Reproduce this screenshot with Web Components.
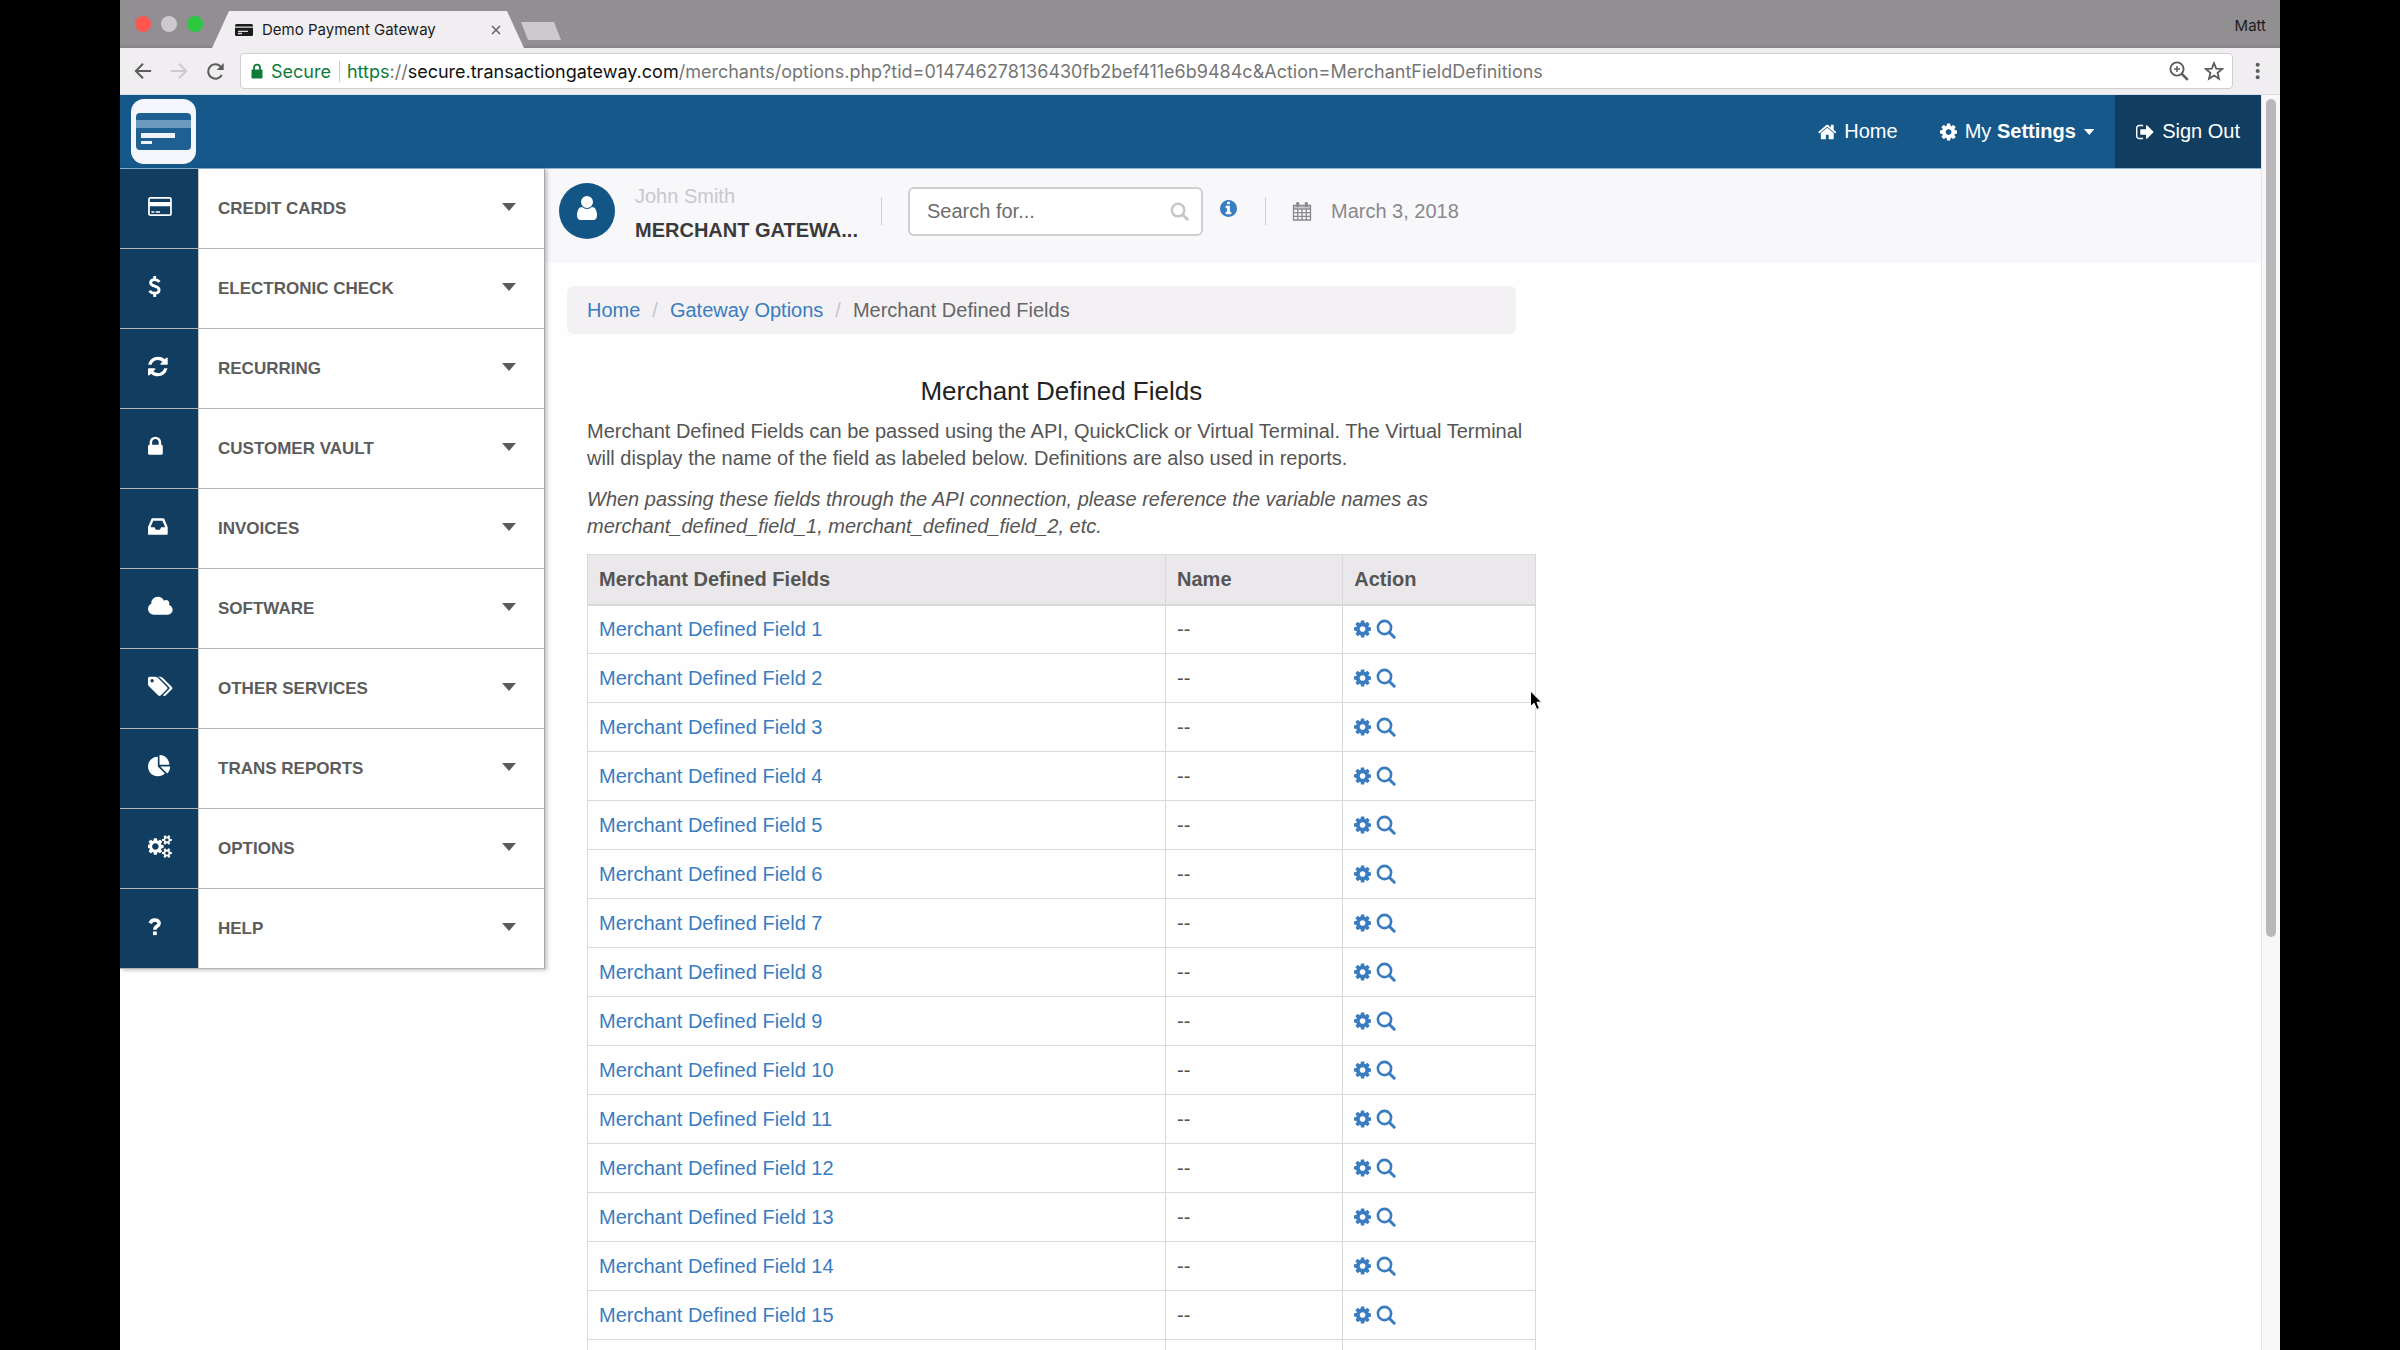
<!DOCTYPE html>
<html lang="en">
<head>
<meta charset="utf-8">
<title>Demo Payment Gateway</title>
<style>
    html, body {
        height: 100%;
        margin: 0;
    }

    body {
        background: #000;
        font-family: "Liberation Sans", Arial, sans-serif;
        font-size: 20px;
        color: #555;
        overflow: hidden;
    }
</style>
</head>
<body>
<browser-window>
    <tab-strip slot="tabs" profile="Matt">Demo Payment Gateway</tab-strip>
    <browser-toolbar slot="toolbar"></browser-toolbar>

    <site-header></site-header>
    <page-layout>
        <side-menu slot="menu">
            <menu-item icon="card">CREDIT CARDS</menu-item>
            <menu-item icon="dollar">ELECTRONIC CHECK</menu-item>
            <menu-item icon="refresh">RECURRING</menu-item>
            <menu-item icon="lock">CUSTOMER VAULT</menu-item>
            <menu-item icon="inbox">INVOICES</menu-item>
            <menu-item icon="cloud">SOFTWARE</menu-item>
            <menu-item icon="tags">OTHER SERVICES</menu-item>
            <menu-item icon="pie">TRANS REPORTS</menu-item>
            <menu-item icon="cogs">OPTIONS</menu-item>
            <menu-item icon="question">HELP</menu-item>
        </side-menu>
        <account-bar user="John Smith" company="MERCHANT GATEWA..." date="March 3, 2018"></account-bar>
        <bread-crumbs></bread-crumbs>
        <fields-panel heading="Merchant Defined Fields">
            <span slot="intro">Merchant Defined Fields can be passed using the API, QuickClick or Virtual Terminal. The Virtual Terminal will display the name of the field as labeled below. Definitions are also used in reports.</span>
            <span slot="note">When passing these fields through the API connection, please reference the variable names as merchant_defined_field_1, merchant_defined_field_2, etc.</span>
            <fields-table count="16"></fields-table>
        </fields-panel>
    </page-layout>
</browser-window>

<script>
    // name: [viewBox, markup]
    const ICONS = {
        home: ['64 0 1664 1792', '<path d="M1472 992v480q0 26-19 45t-45 19h-384v-384h-256v384h-384q-26 0-45-19t-19-45v-480q0-1 .5-3t.5-3l575-474 575 474q1 2 1 6zm223-69l-62 74q-8 9-21 11h-3q-13 0-21-7l-692-577-692 577q-12 8-24 7-13-2-21-11l-62-74q-8-10-7-23.5t11-21.5l719-599q32-26 76-26t76 26l244 204v-195q0-14 9-23t23-9h192q14 0 23 9t9 23v408l219 182q10 8 11 21.5t-7 23.5z"/>'],
        cog: ['128 0 1536 1792', '<path d="M1152 896q0-106-75-181t-181-75-181 75-75 181 75 181 181 75 181-75 75-181zm512-109v222q0 12-8 23t-20 13l-185 28q-19 54-39 91 35 50 107 138 10 12 10 25t-9 23q-27 37-99 108t-94 71q-12 0-26-9l-138-108q-44 23-91 38-16 136-29 186-7 28-36 28h-222q-14 0-24.5-8.5t-11.5-21.5l-28-184q-49-16-90-37l-141 107q-10 9-25 9-14 0-25-11-126-114-165-168-7-10-7-23 0-12 8-23 15-21 51-66.5t54-70.5q-27-50-41-99l-183-27q-13-2-21-12.5t-8-23.5v-222q0-12 8-23t19-13l186-28q14-46 39-92-40-57-107-138-10-12-10-24 0-10 9-23 26-36 98.5-107.5t94.5-71.5q13 0 26 10l138 107q44-23 91-38 16-136 29-186 7-28 36-28h222q14 0 24.5 8.5t11.5 21.5l28 184q49 16 90 37l142-107q9-9 24-9 13 0 25 10 129 119 165 170 7 8 7 22 0 12-8 23-15 21-51 66.5t-54 70.5q26 50 41 98l183 28q13 2 21 12.5t8 23.5z"/>'],
        signout: ['64 0 1600 1792', '<path d="M704 1440q0 4 1 20t.5 26.5-3 23.5-10 19.5-20.5 6.5h-320q-119 0-203.5-84.5t-84.5-203.5v-704q0-119 84.5-203.5t203.5-84.5h320q13 0 22.5 9.5t9.5 22.5q0 4 1 20t.5 26.5-3 23.5-10 19.5-20.5 6.5h-320q-66 0-113 47t-47 113v704q0 66 47 113t113 47h312l11.5 1 11.5 3 8 5.5 7 9 2 13.5zm928-544q0 26-19 45l-544 544q-19 19-45 19t-45-19-19-45v-288h-448q-26 0-45-19t-19-45v-384q0-26 19-45t45-19h448v-288q0-26 19-45t45-19 45 19l544 544q19 19 19 45z"/>'],
        refresh: ['128 0 1536 1792', '<path d="M1639 1056q0 5-1 7-64 268-268 434.5t-478 166.5q-146 0-282.5-55t-243.5-157l-129 129q-19 19-45 19t-45-19-19-45v-448q0-26 19-45t45-19h448q26 0 45 19t19 45-19 45l-137 137q71 66 161 102t187 36q134 0 250-65t186-179q11-17 53-117 8-23 30-23h192q13 0 22.5 9.5t9.5 22.5zm25-800v448q0 26-19 45t-45 19h-448q-26 0-45-19t-19-45 19-45l138-138q-148-137-349-137-134 0-250 65t-186 179q-11 17-53 117-8 23-30 23h-199q-13 0-22.5-9.5t-9.5-22.5v-7q65-268 270-434.5t480-166.5q146 0 284 55.5t245 156.5l130-129q19-19 45-19t45 19 19 45z"/>'],
        lock: ['320 0 1152 1792', '<path d="M640 768h512v-192q0-106-75-181t-181-75-181 75-75 181v192zm832 96v576q0 40-28 68t-68 28h-960q-40 0-68-28t-28-68v-576q0-40 28-68t68-28h32v-192q0-184 132-316t316-132 316 132 132 316v192h32q40 0 68 28t28 68z"/>'],
        inbox: ['128 0 1536 1792', '<path d="M1151 960h316q-1-3-2.5-8t-2.5-8l-212-496h-708l-212 496q-1 2-2.5 8t-2.5 8h316l95 192h320zm513 30v482q0 26-19 45t-45 19h-1408q-26 0-45-19t-19-45v-482q0-62 25-123l238-552q10-25 36.5-42t52.5-17h832q26 0 52.5 17t36.5 42l238 552q25 61 25 123z"/>'],
        cloud: ['64 0 1920 1792', '<path d="M1984 1152q0 159-112.5 271.5t-271.5 112.5h-1088q-185 0-316.5-131.5t-131.5-316.5q0-132 71-241.5t187-163.5q-2-28-2-43 0-212 150-362t362-150q158 0 286.5 88t187.5 230q70-62 166-62 106 0 181 75t75 181q0 75-41 138 129 30 213 134.5t84 239.5z"/>'],
        tags: ['0 0 1920 1792', '<path d="M448 448q0-53-37.5-90.5t-90.5-37.5-90.5 37.5-37.5 90.5 37.5 90.5 90.5 37.5 90.5-37.5 37.5-90.5zm1067 576q0 53-37 90l-491 492q-39 37-91 37-53 0-90-37l-715-716q-38-37-64.5-101t-26.5-117v-416q0-52 38-90t90-38h416q53 0 117 26.5t102 64.5l715 714q37 39 37 91zm384 0q0 53-37 90l-491 492q-39 37-91 37-36 0-59-14t-53-45l470-470q37-37 37-90 0-52-37-91l-715-714q-38-38-102-64.5t-117-26.5h224q53 0 117 26.5t102 64.5l715 714q37 39 37 91z"/>'],
        pie: ['0 0 1792 1792', '<path d="M768 890l546 546q-106 108-247.5 168t-298.5 60q-209 0-385.5-103t-279.5-279.5-103-385.5 103-385.5 279.5-279.5 385.5-103v762zm187 6h773q0 157-60 298.5t-168 247.5zm709-128h-768v-768q209 0 385.5 103t279.5 279.5 103 385.5z"/>'],
        cogs: ['0 0 1920 1792', '<path d="M832 896q0-106-75-181t-181-75-181 75-75 181 75 181 181 75 181-75 75-181zm768 512q0-52-38-90t-90-38-90 38-38 90q0 53 37.5 90.5t90.5 37.5 90.5-37.5 37.5-90.5zm0-1024q0-52-38-90t-90-38-90 38-38 90q0 53 37.5 90.5t90.5 37.5 90.5-37.5 37.5-90.5zm-384 421v185q0 10-7 19.5t-16 10.5l-155 24q-11 35-32 76 34 48 90 115 7 11 7 20 0 12-7 19-23 30-82.5 89.5t-78.5 59.5q-11 0-21-7l-115-90q-37 19-77 31-11 108-23 155-7 24-30 24h-186q-11 0-20-7.5t-10-17.5l-23-153q-34-10-75-31l-118 89q-7 7-20 7-11 0-21-8-144-133-144-160 0-9 7-19 10-14 41-53t47-61q-23-44-35-82l-152-24q-10-1-17-9.5t-7-19.5v-185q0-10 7-19.5t16-10.5l155-24q11-35 32-76-34-48-90-115-7-11-7-20 0-12 7-20 22-30 82-89t79-59q11 0 21 7l115 90q34-18 77-32 11-108 23-154 7-24 30-24h186q11 0 20 7.5t10 17.5l23 153q34 10 75 31l118-89q8-7 20-7 11 0 21 8 144 133 144 160 0 8-7 19-12 16-42 54t-45 60q23 48 34 82l152 23q10 2 17 10.5t7 19.5zm640 533v140q0 16-149 31-12 27-30 52 51 113 51 138 0 4-4 7-122 71-124 71-8 0-46-47t-52-68q-20 2-30 2t-30-2q-14 21-52 68t-46 47q-2 0-124-71-4-3-4-7 0-25 51-138-18-25-30-52-149-15-149-31v-140q0-16 149-31 13-29 30-52-51-113-51-138 0-4 4-7 4-2 35-20t59-34 30-16q8 0 46 46.5t52 67.5q20-2 30-2t30 2q51-71 92-112l6-2q4 0 124 70 4 3 4 7 0 25-51 138 17 23 30 52 149 15 149 31zm0-1024v140q0 16-149 31-12 27-30 52 51 113 51 138 0 4-4 7-122 71-124 71-8 0-46-47t-52-68q-20 2-30 2t-30-2q-14 21-52 68t-46 47q-2 0-124-71-4-3-4-7 0-25 51-138-18-25-30-52-149-15-149-31v-140q0-16 149-31 13-29 30-52-51-113-51-138 0-4 4-7 4-2 35-20t59-34 30-16q8 0 46 46.5t52 67.5q20-2 30-2t30 2q51-71 92-112l6-2q4 0 124 70 4 3 4 7 0 25-51 138 17 23 30 52 149 15 149 31z"/>'],
        search: ['0 0 20 20', '<circle cx="8.5" cy="8.5" r="6.6" fill="none" stroke="currentColor" stroke-width="2.6"/><path d="M13.2 13.2l5 5" fill="none" stroke="currentColor" stroke-width="3" stroke-linecap="round"/>'],
        user: ['256 128 1280 1536', '<path d="M1536 1399q0 109-62.5 187t-150.5 78h-854q-88 0-150.5-78t-62.5-187q0-85 8.5-160.5t31.5-152 58.5-131 94-89 134.5-34.5q131 128 313 128t313-128q76 0 134.5 34.5t94 89 58.5 131 31.5 152 8.5 160.5zm-256-887q0 159-112.5 271.5t-271.5 112.5-271.5-112.5-112.5-271.5 112.5-271.5 271.5-112.5 271.5 112.5 112.5 271.5z"/>'],
        info: ['128 128 1536 1536', '<path d="M1152 1376v-160q0-14-9-23t-23-9h-96v-512q0-14-9-23t-23-9h-320q-14 0-23 9t-9 23v160q0 14 9 23t23 9h96v320h-96q-14 0-23 9t-9 23v160q0 14 9 23t23 9h448q14 0 23-9t9-23zm-128-896v-160q0-14-9-23t-23-9h-192q-14 0-23 9t-9 23v160q0 14 9 23t23 9h192q14 0 23-9t9-23zm640 416q0 209-103 385.5t-279.5 279.5-385.5 103-385.5-103-279.5-279.5-103-385.5 103-385.5 279.5-279.5 385.5-103 385.5 103 279.5 279.5 103 385.5z"/>'],
        card: ['0 0 25 24', '<rect x="1" y="3" width="23" height="18" rx="1.5" fill="none" stroke="currentColor" stroke-width="1.8"/><path d="M1 7.2h23v4.6H1zM3.6 17h3v1.6h-3zM8 17h4.6v1.6H8z"/>'],
        dollar: ['0 0 14 24', '<path d="M12 7.2C10.6 5.6 8.9 4.8 7 4.8c-2.6 0-4.3 1.3-4.3 3.3 0 4.6 8.9 2.6 8.9 7.4 0 2.2-1.9 3.6-4.6 3.6-2.3 0-4.2-.9-5.5-2.5M7 1v4M7 19v4" fill="none" stroke="currentColor" stroke-width="3"/>'],
        question: ['0 0 14 24', '<path d="M2.2 8.6C3.2 6.2 5 5.2 7.2 5.2c2.5 0 4.4 1.4 4.4 3.5 0 3.3-4.5 3-4.5 6.6" fill="none" stroke="currentColor" stroke-width="3.8"/><path d="M5.2 17.2h4v3.8h-4z"/>'],
        calendar: ['0 0 20 20', '<path d="M1.5 4.5h17v14.5h-17zM1.5 8h17M1.5 11.7h17M1.5 15.3h17M5.7 8v11M10 8v11M14.3 8v11" fill="none" stroke="currentColor" stroke-width="1.3"/><path d="M1 4h18v3H1z" opacity=".45"/><rect x="4.2" y="1" width="3" height="5" rx="1.2"/><rect x="12.8" y="1" width="3" height="5" rx="1.2"/>'],
        back: ['0 0 20 20', '<path d="M19 10H2.5M10 2L2 10l8 8" fill="none" stroke="currentColor" stroke-width="2.2"/>'],
        forward: ['0 0 20 20', '<path d="M1 10h16.5M10 2l8 8-8 8" fill="none" stroke="currentColor" stroke-width="2.2"/>'],
        reload: ['0 0 20 20', '<path d="M16.6 13.6A7.6 7.6 0 1 1 15.3 4.6" fill="none" stroke="currentColor" stroke-width="2.2"/><path d="M18.6 1v7.4h-7.4z"/>'],
        padlock: ['0 0 12 16', '<path d="M3 7V4.6a3 3 0 0 1 6 0V7" fill="none" stroke="currentColor" stroke-width="1.8"/><rect x="0.5" y="6.5" width="11" height="9" rx="1"/>'],
        zoom: ['0 0 20 20', '<circle cx="8" cy="8" r="6.6" fill="none" stroke="currentColor" stroke-width="1.9"/><path d="M8 5v6M5 8h6" stroke="currentColor" stroke-width="1.5"/><path d="M12.8 12.8l6 6" stroke="currentColor" stroke-width="2.6"/>'],
        star: ['0 0 20 20', '<path d="M10 2.2l2.2 5.5 5.9.4-4.5 3.8 1.4 5.8-5-3.2-5 3.2 1.4-5.8-4.5-3.8 5.9-.4z" fill="none" stroke="currentColor" stroke-width="1.8"/>'],
        dots: ['0 0 6 20', '<circle cx="3" cy="3" r="2.2"/><circle cx="3" cy="10" r="2.2"/><circle cx="3" cy="17" r="2.2"/>'],
        close: ['0 0 10 10', '<path d="M1 1l8 8M9 1l-8 8" stroke="currentColor" stroke-width="1.6"/>'],
        favicon: ['0 0 18 12', '<rect width="18" height="12" rx="1.5"/><path d="M0 3.2h18M3 7.3h10M3 9.5h4" stroke="#ddd" stroke-width="1.3"/>'],
        caret: ['0 0 14 8', '<path d="M0 0h14L7 8z"/>'],
        logo: ['0 0 65 65', '<rect width="65" height="65" rx="13" fill="#f5f6fb"/><rect x="5" y="14" width="55" height="37" rx="4" fill="#1e6092"/><path d="M5 21h55v8H5z" fill="#6b9abe"/><path d="M10 34h34v5H10zM10 42h11v3H10z" fill="#f0f4fa"/>'],
        pointer: ['0 0 14 22', '<path d="M1.5 1v15.5l3.6-3.3 2.6 6.3 2.8-1.2-2.6-6.1h4.7z" stroke="#fff" stroke-width="1"/>']
    };

    const RESET = `
        :host, *, *::before, *::after {
            box-sizing: border-box;
        }

        a {
            color: inherit;
            text-decoration: none;
        }

        button {
            display: flex;
            align-items: center;
            padding: 0;
            border: 0;
            background: none;
            color: inherit;
            font: inherit;
        }
    `;

    class BaseElement extends HTMLElement {
        connectedCallback() {
            if (!this.shadowRoot) {
                this.attachShadow({ mode: 'open' });
            }
            this.shadowRoot.innerHTML = `<style>${RESET}</style>${this.template()}`;
        }

        template() {
            return '<slot></slot>';
        }
    }

    class UiIcon extends BaseElement {
        template() {
            const [box, markup] = ICONS[this.getAttribute('name')];
            const size = this.getAttribute('size') || '20';
            return `
                <style>
                    :host { display: inline-flex; flex: none; }
                    svg { height: ${size}px; width: auto; fill: currentColor; display: block; }
                </style>
                <svg viewBox="${box}" aria-hidden="true">${markup}</svg>
            `;
        }
    }

    class BrowserWindow extends BaseElement {
        template() {
            return `
                <style>
                    :host {
                        display: flex;
                        flex-direction: column;
                        height: 100vh;
                        margin: 0 5%;
                        background: #fefefe;
                    }
                    .view { display: flex; flex: 1; min-height: 0; }
                    .page { flex: 1; min-width: 0; overflow: hidden auto; scrollbar-width: none; }
                    .scrollbar {
                        width: 19px;
                        padding: 4px 4px 0 4px;
                        background: #f9f7fa;
                        border-left: 1px solid #e6e4e7;
                    }
                    .thumb { height: 67%; border-radius: 5px; background: #b9b7b9; }
                </style>
                <slot name="tabs"></slot>
                <slot name="toolbar"></slot>
                <div class="view">
                    <div class="page"><slot></slot></div>
                    <div class="scrollbar"><div class="thumb"></div></div>
                </div>
            `;
        }
    }

    class TabStrip extends BaseElement {
        template() {
            return `
                <style>
                    :host {
                        display: flex;
                        align-items: flex-end;
                        height: 48px;
                        padding: 0 14px 0 15px;
                        background: linear-gradient(#918f91 44px, #858385);
                        font-family: Inter, sans-serif;
                        font-size: 15px;
                        color: #1c1c1c;
                    }
                    .lights { display: flex; gap: 10px; align-self: center; }
                    .lights button { width: 16px; height: 16px; border-radius: 50%; background: #fc5650; }
                    .lights button:nth-child(2) { background: #cccacc; }
                    .lights button:nth-child(3) { background: #2bc840; }
                    .tab {
                        display: flex;
                        align-items: center;
                        gap: 9px;
                        width: 312px;
                        height: 37px;
                        margin-left: 9px;
                        padding: 0 23px;
                        background: #f0eef1;
                        clip-path: polygon(17px 0, 295px 0, 100% 100%, 0 100%);
                    }
                    .tab span { flex: 1; }
                    .tab button { color: #666; }
                    .new {
                        width: 40px;
                        height: 18px;
                        margin: 0 auto 8px -3px;
                        background: #cccacc;
                        clip-path: polygon(0 0, 33px 0, 100% 100%, 7px 100%);
                    }
                    .profile { align-self: center; padding-top: 2px; }
                </style>
                <div class="lights">
                    <button aria-label="Close window"></button>
                    <button aria-label="Minimize window"></button>
                    <button aria-label="Zoom window"></button>
                </div>
                <div class="tab">
                    <ui-icon name="favicon" size="12"></ui-icon>
                    <span><slot></slot></span>
                    <button aria-label="Close tab"><ui-icon name="close" size="10"></ui-icon></button>
                </div>
                <button class="new" aria-label="New tab"></button>
                <button class="profile">${this.getAttribute('profile')}</button>
            `;
        }
    }

    class BrowserToolbar extends BaseElement {
        template() {
            return `
                <style>
                    :host {
                        display: flex;
                        align-items: center;
                        gap: 18px;
                        height: 47px;
                        padding: 0 20px 0 14px;
                        background: #f0eef1;
                        border-bottom: 1px solid #d8dfe8;
                        font-family: Inter, sans-serif;
                        font-size: 18px;
                        color: #5c5c5c;
                    }
                    .off { color: #cccacc; }
                    .address {
                        display: flex;
                        flex: 1;
                        align-items: center;
                        height: 36px;
                        margin: 0 4px 0 -3px;
                        padding: 0 8px 0 10px;
                        background: #fff;
                        border: 1px solid #d0ced1;
                        border-radius: 4px;
                        color: #757575;
                        white-space: nowrap;
                    }
                    .secure {
                        gap: 8px;
                        padding-right: 8px;
                        border-right: 1px solid #ccc;
                        color: #0f7c3a;
                    }
                    .url { flex: 1; padding-left: 7px; outline: 0; }
                    .scheme { color: #0f7c3a; }
                    .host { color: #111; }
                    .tools { display: flex; gap: 15px; color: #5c5c5c; }
                </style>
                <button aria-label="Back"><ui-icon name="back" size="18"></ui-icon></button>
                <button class="off" aria-label="Forward"><ui-icon name="forward" size="18"></ui-icon></button>
                <button aria-label="Reload"><ui-icon name="reload" size="19"></ui-icon></button>
                <div class="address">
                    <button class="secure"><ui-icon name="padlock" size="16"></ui-icon>Secure</button>
                    <div class="url" role="textbox" aria-label="Address" contenteditable="true" spellcheck="false"><span class="scheme">https</span>://<span class="host">secure.transactiongateway.com</span>/merchants/options.php?tid=014746278136430fb2bef411e6b9484c&amp;Action=MerchantFieldDefinitions</div>
                    <div class="tools">
                        <button aria-label="Zoom"><ui-icon name="zoom"></ui-icon></button>
                        <button aria-label="Bookmark"><ui-icon name="star"></ui-icon></button>
                    </div>
                </div>
                <button aria-label="Menu"><ui-icon name="dots" size="18"></ui-icon></button>
            `;
        }
    }

    class SiteHeader extends BaseElement {
        template() {
            return `
                <style>
                    :host {
                        display: flex;
                        align-items: stretch;
                        justify-content: space-between;
                        height: 74px;
                        background: #16588a;
                        border-bottom: 1px solid #8fb4d4;
                        color: #fff;
                    }
                    .logo { display: flex; align-items: center; padding-left: 11px; }
                    nav { display: flex; }
                    nav a, nav button { display: flex; align-items: center; gap: 8px; padding: 0 21px; }
                    .out { background: #113e60; }
                </style>
                <a class="logo" href="#" aria-label="Payment Gateway"><ui-icon name="logo" size="65"></ui-icon></a>
                <nav>
                    <a href="#"><ui-icon name="home"></ui-icon>Home</a>
                    <button><ui-icon name="cog"></ui-icon><span>My <b>Settings</b></span><ui-icon name="caret" size="6"></ui-icon></button>
                    <a class="out" href="#"><ui-icon name="signout"></ui-icon>Sign Out</a>
                </nav>
            `;
        }
    }

    class PageLayout extends BaseElement {
        template() {
            return `
                <style>
                    :host { display: flex; align-items: flex-start; }
                    main { flex: 1; min-width: 0; }
                </style>
                <slot name="menu"></slot>
                <main><slot></slot></main>
            `;
        }
    }

    class SideMenu extends BaseElement {
        template() {
            return `
                <style>
                    :host {
                        display: block;
                        position: relative;
                        flex: none;
                        width: 425px;
                        border-right: 1px solid #aaa8ab;
                        box-shadow: 2px 1px 4px rgba(0, 0, 0, 0.25);
                        background: #fefefe;
                    }
                </style>
                <slot></slot>
            `;
        }
    }

    class MenuItem extends BaseElement {
        template() {
            return `
                <style>
                    :host { display: block; }
                    button {
                        width: 100%;
                        height: 80px;
                        border-bottom: 1px solid #b5b4b6;
                        font-size: 17px;
                        font-weight: bold;
                        color: #5c5c5c;
                        text-align: left;
                    }
                    .icon {
                        display: flex;
                        align-items: center;
                        align-self: stretch;
                        width: 79px;
                        padding: 0 0 4px 28px;
                        background: #113e60;
                        border-right: 1px solid #c6c5c7;
                        color: #fff;
                    }
                    .label { flex: 1; padding-left: 19px; }
                    .caret { display: flex; padding: 0 28px 4px 0; }
                </style>
                <button aria-expanded="false">
                    <span class="icon"><ui-icon name="${this.getAttribute('icon')}" size="23"></ui-icon></span>
                    <span class="label"><slot></slot></span>
                    <span class="caret"><ui-icon name="caret" size="8"></ui-icon></span>
                </button>
            `;
        }
    }

    class AccountBar extends BaseElement {
        template() {
            return `
                <style>
                    :host {
                        display: flex;
                        align-items: center;
                        height: 94px;
                        padding: 0 14px 10px;
                        background: #f8f7fa;
                    }
                    .avatar {
                        display: flex;
                        align-items: center;
                        justify-content: center;
                        width: 56px;
                        height: 56px;
                        padding-bottom: 6px;
                        border-radius: 50%;
                        background: #135585;
                        color: #fff;
                    }
                    .who { width: 228px; margin-left: 20px; padding-top: 4px; line-height: 34px; white-space: nowrap; }
                    .user { color: #c9c8ca; }
                    .company { font-weight: bold; color: #3a3a3a; }
                    hr { width: 1px; height: 28px; margin: 0 26px 0 18px; border: 0; background: #cfced1; }
                    label { position: relative; display: flex; align-items: center; }
                    input {
                        width: 295px;
                        height: 49px;
                        padding: 0 48px 0 17px;
                        border: 2px solid #d0ced1;
                        border-radius: 6px;
                        background: #fff;
                        font: inherit;
                        color: #555;
                    }
                    input::placeholder { color: #6d6d6d; opacity: 1; }
                    label ui-icon { position: absolute; right: 14px; color: #c6c5c7; }
                    .info { padding: 0 10px 6px 17px; color: #3a7cc0; }
                    .date { display: flex; align-items: center; gap: 19px; color: #8a888b; }
                </style>
                <div class="avatar"><ui-icon name="user" size="24"></ui-icon></div>
                <div class="who">
                    <div class="user">${this.getAttribute('user')}</div>
                    <div class="company">${this.getAttribute('company')}</div>
                </div>
                <hr>
                <label>
                    <input type="search" placeholder="Search for..." aria-label="Search">
                    <ui-icon name="search" size="19"></ui-icon>
                </label>
                <button class="info" aria-label="Search help"><ui-icon name="info" size="17"></ui-icon></button>
                <hr>
                <div class="date"><ui-icon name="calendar"></ui-icon><time datetime="2018-03-03">${this.getAttribute('date')}</time></div>
            `;
        }
    }

    class BreadCrumbs extends BaseElement {
        template() {
            return `
                <style>
                    :host { display: block; margin: 23px 0 0 22px; }
                    ol {
                        display: flex;
                        width: 56%;
                        height: 48px;
                        margin: 0;
                        padding: 0 20px;
                        align-items: center;
                        border-radius: 6px;
                        background: #f3f1f4;
                        list-style: none;
                        color: #666;
                    }
                    li + li::before { content: "/"; padding: 0 12px; color: #c6c5c7; }
                    a { color: #3a7cc0; }
                </style>
                <nav aria-label="Breadcrumb">
                    <ol>
                        <li><a href="#">Home</a></li>
                        <li><a href="#">Gateway Options</a></li>
                        <li aria-current="page">Merchant Defined Fields</li>
                    </ol>
                </nav>
            `;
        }
    }

    class FieldsPanel extends BaseElement {
        template() {
            return `
                <style>
                    :host { display: block; margin: 39px 0 0 22px; }
                    section { width: 56%; margin-left: 20px; }
                    h1 {
                        margin: 0 0 9px;
                        font-size: 26px;
                        font-weight: normal;
                        line-height: 36px;
                        text-align: center;
                        color: #222;
                    }
                    p { margin: 0 0 14px; line-height: 27px; }
                    .note { font-style: italic; }
                </style>
                <section>
                    <h1>${this.getAttribute('heading')}</h1>
                    <p><slot name="intro"></slot></p>
                    <p class="note"><slot name="note"></slot></p>
                    <slot></slot>
                </section>
            `;
        }
    }

    class FieldsTable extends BaseElement {
        template() {
            return `
                <style>
                    :host { display: block; position: relative; }
                    table { width: 100%; table-layout: fixed; border-collapse: collapse; }
                    th, td {
                        height: 49px;
                        padding: 0 11px;
                        border: 1px solid #d9d8da;
                        text-align: left;
                    }
                    th { height: 50px; background: #eae8eb; border-bottom-width: 2px; }
                    th:nth-child(1) { width: 61%; }
                    th:nth-child(2) { width: 18.7%; }
                    a { color: #3a7cc0; }
                    .actions { display: flex; gap: 5px; }
                    .actions a { display: flex; }
                    .pointer { position: absolute; left: 942px; top: 136px; color: #000; }
                </style>
                <table>
                    <thead>
                        <tr><th>Merchant Defined Fields</th><th>Name</th><th>Action</th></tr>
                    </thead>
                    <tbody>${this.rows()}</tbody>
                </table>
                <ui-icon class="pointer" name="pointer" size="22"></ui-icon>
            `;
        }

        rows() {
            const count = Number(this.getAttribute('count'));
            let html = '';
            for (let i = 1; i <= count; i++) {
                html += `
                    <tr>
                        <td><a href="#">Merchant Defined Field ${i}</a></td>
                        <td>--</td>
                        <td>
                            <div class="actions">
                                <a href="#" aria-label="Edit field ${i}"><ui-icon name="cog"></ui-icon></a>
                                <a href="#" aria-label="View field ${i}"><ui-icon name="search"></ui-icon></a>
                            </div>
                        </td>
                    </tr>`;
            }
            return html;
        }
    }

    customElements.define('ui-icon', UiIcon);
    customElements.define('browser-window', BrowserWindow);
    customElements.define('tab-strip', TabStrip);
    customElements.define('browser-toolbar', BrowserToolbar);
    customElements.define('site-header', SiteHeader);
    customElements.define('page-layout', PageLayout);
    customElements.define('side-menu', SideMenu);
    customElements.define('menu-item', MenuItem);
    customElements.define('account-bar', AccountBar);
    customElements.define('bread-crumbs', BreadCrumbs);
    customElements.define('fields-panel', FieldsPanel);
    customElements.define('fields-table', FieldsTable);
</script>
</body>
</html>
